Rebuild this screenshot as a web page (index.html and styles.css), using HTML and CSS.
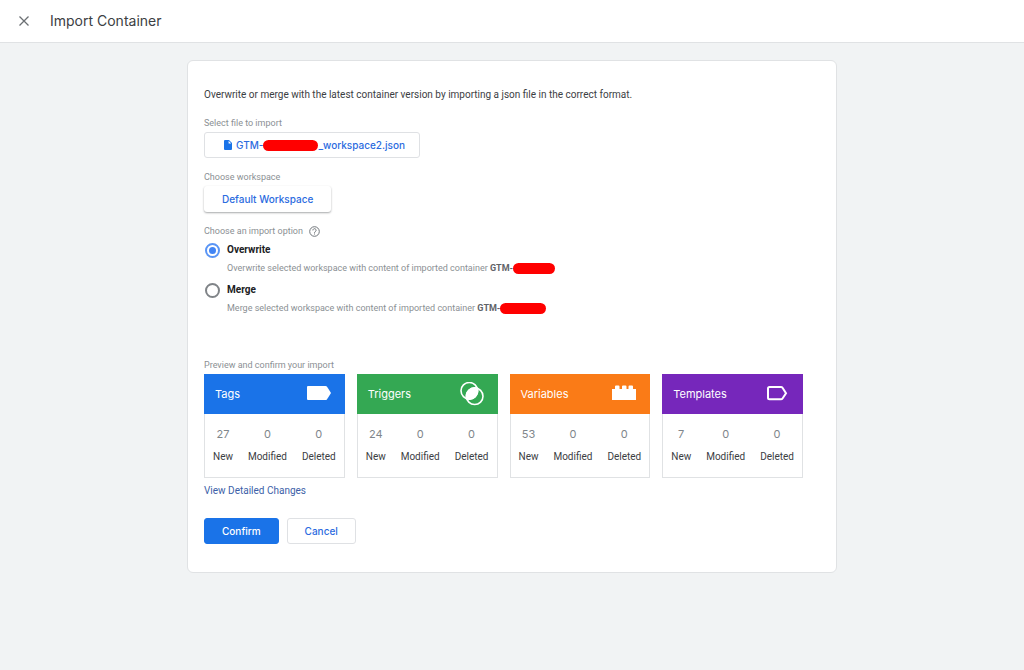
FILE: index.html
```html
<!DOCTYPE html>
<html lang="en">
<head>
<meta charset="utf-8">
<meta name="viewport" content="width=device-width, initial-scale=1">
<title>Import Container</title>
<link rel="stylesheet" href="styles.css">
</head>
<body>
<header class="topbar">
  <button class="close" type="button" aria-label="Close">
    <svg width="12" height="12" viewBox="0 0 12 12"><path d="M1.500 1.500l9 9M10.500 1.500l-9 9" stroke="#6b6f73" stroke-width="1.3" fill="none"/></svg>
  </button>
  <h1 class="title">Import Container</h1>
</header>
<main class="page">
  <form class="card">
    <p class="intro">Overwrite or merge with the latest container version by importing a json file in the correct format.</p>

    <div class="field">
      <label class="label" for="file">Select file to import</label>
      <button class="btn btn-file" id="file" type="button">
        <svg class="doc" width="8" height="10" viewBox="0 0 8 10"><path d="M1 0h4l3 3v6a1 1 0 0 1-1 1H1a1 1 0 0 1-1-1V1a1 1 0 0 1 1-1z" fill="#1a73e8"/><path d="M4.6.8v2.6h2.6z" fill="#fff"/></svg>
        <span>GTM-</span><span class="redact redact-file"></span><span>_workspace2.json</span>
      </button>
    </div>

    <div class="field">
      <label class="label" for="workspace">Choose workspace</label>
      <button class="btn btn-raised" id="workspace" type="button">Default Workspace</button>
    </div>

    <fieldset class="options">
      <legend class="label legend">Choose an import option
        <svg class="help" width="11" height="11" viewBox="0 0 11 11"><circle cx="5.5" cy="5.5" r="4.8" fill="none" stroke="#70757a"/><path d="M3.9 4.4a1.6 1.6 0 1 1 2.5 1.2c-.6.4-.9.6-.9 1.3" fill="none" stroke="#70757a"/><path d="M5 7.6h1v1H5z" fill="#70757a"/></svg>
      </legend>
      <div class="option">
        <input class="radio" type="radio" name="mode" id="overwrite" checked>
        <label class="option-name" for="overwrite">Overwrite</label>
        <p class="option-text">Overwrite selected workspace with content of imported container <b>GTM-</b><span class="redact redact-a"></span></p>
      </div>
      <div class="option">
        <input class="radio" type="radio" name="mode" id="merge">
        <label class="option-name" for="merge">Merge</label>
        <p class="option-text">Merge selected workspace with content of imported container <b>GTM-</b><span class="redact redact-b"></span></p>
      </div>
    </fieldset>

    <h2 class="label">Preview and confirm your import</h2>
    <div class="tiles">
      <section class="tile">
        <h3 class="tile-head blue">Tags
          <svg width="24" height="24" viewBox="0 0 24 24"><path d="M0 5a1 1 0 0 1 1-1h17.500c.6 0 1 .2 1.400.6L24 11l-4.100 6.400c-.4.400-.8.600-1.400.600H1a1 1 0 0 1-1-1z" fill="#fff"/></svg>
        </h3>
        <dl class="counts">
          <div class="count"><dt>New</dt><dd>27</dd></div>
          <div class="count"><dt>Modified</dt><dd>0</dd></div>
          <div class="count"><dt>Deleted</dt><dd>0</dd></div>
        </dl>
      </section>
      <section class="tile">
        <h3 class="tile-head green">Triggers
          <svg width="24" height="24" viewBox="0 0 24 24"><g fill="none" stroke="#fff" stroke-width="1.6"><circle cx="9.300" cy="8.800" r="8.300"/><circle cx="14.700" cy="14.200" r="8.300"/></g><path d="M17.200 6.300A8.300 8.300 0 0 1 6.800 16.700A8.300 8.300 0 0 1 17.200 6.300z" fill="#fff" stroke="#fff" stroke-width="1.6"/></svg>
        </h3>
        <dl class="counts">
          <div class="count"><dt>New</dt><dd>24</dd></div>
          <div class="count"><dt>Modified</dt><dd>0</dd></div>
          <div class="count"><dt>Deleted</dt><dd>0</dd></div>
        </dl>
      </section>
      <section class="tile">
        <h3 class="tile-head orange">Variables
          <svg width="24" height="24" viewBox="0 0 24 24"><path d="M0 18V7h3V4.500a1 1 0 0 1 1-1h2.500a1 1 0 0 1 1 1V7h2.500V4.500a1 1 0 0 1 1-1h2.500a1 1 0 0 1 1 1V7h2V4.500a1 1 0 0 1 1-1H20a1 1 0 0 1 1 1V7h3v11z" fill="#fff"/></svg>
        </h3>
        <dl class="counts">
          <div class="count"><dt>New</dt><dd>53</dd></div>
          <div class="count"><dt>Modified</dt><dd>0</dd></div>
          <div class="count"><dt>Deleted</dt><dd>0</dd></div>
        </dl>
      </section>
      <section class="tile">
        <h3 class="tile-head purple">Templates
          <svg width="24" height="24" viewBox="0 0 24 24"><path d="M4.500 4.900h11.500c.7 0 1.100.2 1.500.8L21 11.200 17.500 16.500c-.4.600-.8.800-1.500.800H4.500c-.9 0-1.500-.6-1.500-1.500V6.400c0-.9.600-1.500 1.500-1.500z" fill="none" stroke="#fff" stroke-width="2"/></svg>
        </h3>
        <dl class="counts">
          <div class="count"><dt>New</dt><dd>7</dd></div>
          <div class="count"><dt>Modified</dt><dd>0</dd></div>
          <div class="count"><dt>Deleted</dt><dd>0</dd></div>
        </dl>
      </section>
    </div>
    <a class="details" href="#">View Detailed Changes</a>
    <div class="actions">
      <button class="btn btn-primary" type="button">Confirm</button>
      <button class="btn" type="button">Cancel</button>
    </div>
  </form>
</main>
</body>
</html>
```
FILE: styles.css
```css
* { box-sizing: border-box; }
body {
  margin: 0;
  min-height: 100vh;
  background: #f1f3f4;
  color: #3c4043;
  font: 10px/16px Roboto, "Liberation Sans", sans-serif;
}
h1, h2, h3, p, dl, dd { margin: 0; font-weight: 400; }
.topbar {
  display: flex;
  align-items: center;
  gap: 20px;
  height: 43px;
  padding: 0 18px;
  background: #fff;
  border-bottom: 1px solid #e0e2e4;
}
.close {
  display: flex;
  padding: 0;
  border: 0;
  background: none;
}
.title { font: 14px/20px Inter, Roboto, sans-serif; color: #3c4043; }
.page { padding: 17px 24px; }
.card {
  max-width: 650px;
  margin: 0 auto;
  padding: 26px 16px 28px;
  background: #fff;
  border: 1px solid #e0e2e4;
  border-radius: 6px;
}
.intro { margin-bottom: 12px; }
.field { margin-bottom: 11px; }
.label {
  display: block;
  padding: 0;
  color: #8b9094;
  font-size: 9px;
  line-height: 17px;
}
.btn {
  display: inline-flex;
  align-items: center;
  height: 26px;
  padding: 0 17px;
  border: 1px solid #dfe1e4;
  border-radius: 3px;
  background: #fff;
  color: #2b6be0;
  font: 500 10px/16px Inter, Roboto, sans-serif;
}
.btn-file { padding-right: 14px; }
.doc { margin: 0 4px 0 2px; }
.redact {
  display: inline-block;
  height: 11px;
  border-radius: 6px;
  background: #f00;
  vertical-align: middle;
}
.redact-file { width: 55px; }
.redact-a { width: 42px; }
.redact-b { width: 46px; }
.btn-raised {
  border-color: transparent;
  box-shadow: 0 1px 2px rgba(60, 64, 67, .45);
}
.options { margin: 0 0 35px; padding: 0; border: 0; }
.legend { display: flex; align-items: center; gap: 6px; margin-bottom: 2px; }
.option {
  display: grid;
  grid-template-columns: 15px 1fr;
  column-gap: 8px;
  align-items: center;
  row-gap: 2px;
  margin-bottom: 6px;
}
.radio {
  appearance: none;
  display: grid;
  place-items: center;
  width: 15px;
  height: 15px;
  margin: 0 0 0 1px;
  border: 2px solid #808488;
  border-radius: 50%;
}
.radio:checked { border-color: #5a95f5; }
.radio:checked::before {
  content: "";
  width: 7px;
  height: 7px;
  border-radius: 50%;
  background: #4285f4;
}
.option-name { color: #202124; font-weight: 700; }
.option-text { grid-column: 2; color: #8b9094; font-size: 9px; }
.option-text b { color: #5f6368; }
.tiles {
  display: grid;
  grid-template-columns: repeat(4, 1fr);
  gap: 12px;
  margin: 0 17px 5px 0;
}
.tile { border: 1px solid #e0e2e4; border-top: 0; }
.tile-head {
  display: flex;
  align-items: center;
  justify-content: space-between;
  height: 40px;
  margin: 0 -1px;
  padding: 0 14px 0 11px;
  color: #fff;
  font: 11px/16px Inter, Roboto, sans-serif;
}
.blue { background: #1a73e8; }
.green { background: #34a853; }
.orange { background: #fa7b17; }
.purple { background: #7627bb; }
.counts {
  display: flex;
  justify-content: space-between;
  padding: 12px 8px 12px;
}
.count {
  display: flex;
  flex-direction: column-reverse;
  gap: 6px;
  text-align: center;
}
.count dd { color: #80868b; font: 11px/17px Inter, Roboto, sans-serif; }
.details { display: inline-block; color: #3c5fa8; text-decoration: none; }
.actions { display: flex; gap: 8px; margin-top: 19px; }
.btn-primary { border-color: #1a73e8; background: #1a73e8; color: #fff; }
```
